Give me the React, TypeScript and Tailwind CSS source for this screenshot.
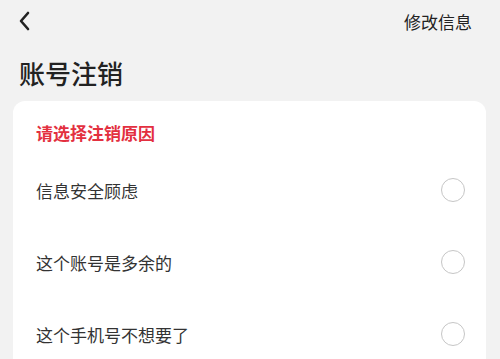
const reasons = ['信息安全顾虑', '这个账号是多余的', '这个手机号不想要了']

export default function App() {
  return (
    <div
      className="w-[500px] h-[359px] overflow-hidden bg-[#f2f2f2]"
      style={{ fontFamily: '"Noto Sans CJK SC", "Noto Sans", sans-serif' }}
    >
      {/* Top bar */}
      <div className="h-[42px] flex items-center justify-between pl-[18px] pr-[28px]">
        <svg width="14" height="20" viewBox="0 0 14 20" className="text-[#222]">
          <polyline
            points="10,2 3,10 10,18"
            fill="none"
            stroke="currentColor"
            strokeWidth="2.6"
            strokeLinecap="round"
            strokeLinejoin="round"
          />
        </svg>
        <span className="text-[17px] leading-none text-[#222]">修改信息</span>
      </div>

      {/* Title */}
      <h1 className="h-[59px] flex items-center pl-[19px] pt-[2px] text-[26px] font-medium leading-none text-[#222]">
        账号注销
      </h1>

      {/* Card */}
      <div className="mx-[13px] mr-[14px] bg-white rounded-[12px] pt-[19px] pl-[23px] pr-[21px] pb-[20px]">
        <div className="h-[24px] flex items-center text-[17px] font-semibold text-[#e3303f] leading-none">
          请选择注销原因
        </div>
        <div className="mt-[10px]">
          {reasons.map((r) => (
            <div key={r} className="h-[72px] flex items-center justify-between">
              <span className="text-[17px] leading-none text-[#333]">{r}</span>
              <span className="w-[24px] h-[24px] rounded-full border-[1.5px] border-[#c6c6c6]" />
            </div>
          ))}
        </div>
      </div>
    </div>
  )
}
